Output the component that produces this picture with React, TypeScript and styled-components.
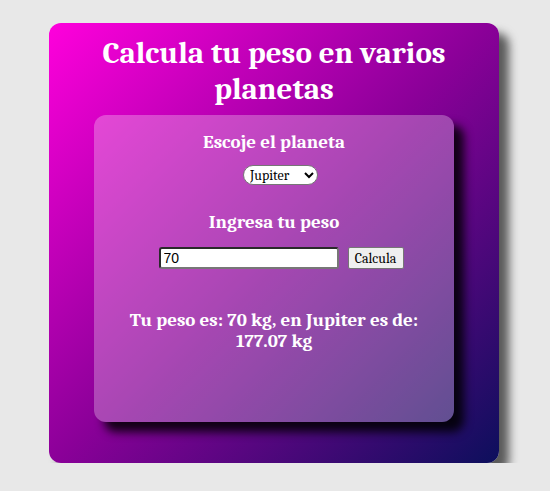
import React, { useState } from 'react'
import styled, { createGlobalStyle } from 'styled-components'

const GlobalStyle = createGlobalStyle`
  body {
    margin: 0;
    background: #e8e8e8;
    font-family: Cambria, 'Liberation Serif', serif;
  }
`

const Page = styled.div`
  display: flex;
  justify-content: center;
  padding-top: 23px;
  padding-right: 2px;
`

const Card = styled.div`
  width: 450px;
  height: 440px;
  box-sizing: border-box;
  border-radius: 12px;
  background: linear-gradient(135deg, #ff00dc 0%, #8a0098 50%, #0c0f5c 100%);
  box-shadow: 10px 10px 10px #5a5a5a;
  display: flex;
  flex-direction: column;
  align-items: center;
  color: white;
`

const Title = styled.h1`
  margin: 12px 0 8px;
  font-size: 31px;
  line-height: 36px;
  font-weight: bold;
  text-align: center;
  width: 380px;
`

const Inner = styled.div`
  width: 360px;
  height: 307px;
  border-radius: 12px;
  background: rgba(255, 255, 255, 0.28);
  box-shadow: 10px 10px 10px rgba(0, 0, 0, 0.85);
  display: flex;
  flex-direction: column;
  align-items: center;
`

const Label = styled.h3<{ $top: number }>`
  margin: ${(p) => p.$top}px 0 0;
  font-size: 19px;
  line-height: 22px;
  font-weight: bold;
`

const PlanetSelect = styled.select`
  margin-top: 12px;
  margin-left: 13px;
  width: 75px;
  height: 20px;
  border-radius: 10px;
  border: 1px solid #767676;
  background: white;
  font-family: Cambria, 'Liberation Serif', serif;
  font-size: 14px;
  padding: 0 2px;
`

const Row = styled.div`
  margin-top: 14px;
  display: flex;
  gap: 9px;
  margin-left: 14px;
`

const WeightInput = styled.input`
  width: 180px;
  height: 22px;
  box-sizing: border-box;
  border: 2px solid #2a2a2a;
  border-right-color: #777;
  border-bottom-color: #777;
  border-radius: 3px;
  padding: 0 3px;
  font-family: 'Liberation Sans', Arial, sans-serif;
  font-size: 14px;
`

const CalcButton = styled.button`
  height: 22px;
  width: 56px;
  padding: 0;
  border: 1px solid #767676;
  border-radius: 2px;
  background: #efefef;
  font-family: Cambria, 'Liberation Serif', serif;
  font-size: 14px;
`

const Result = styled.p`
  margin: 41px 0 0;
  font-size: 19px;
  line-height: 21px;
  font-weight: bold;
  text-align: center;
  width: 330px;
`

const gravity: Record<string, number> = {
  Mercurio: 0.378,
  Venus: 0.907,
  Marte: 0.377,
  Jupiter: 2.5296,
  Saturno: 1.065,
}

const App = () => {
  const [planet, setPlanet] = useState('Jupiter')
  const [weight, setWeight] = useState('70')
  const [result, setResult] = useState({ weight: 70, planet: 'Jupiter' })

  const calcular = () => setResult({ weight: Number(weight), planet })
  const value = (result.weight * gravity[result.planet]).toFixed(2)

  return (
    <>
      <GlobalStyle />
      <Page>
        <Card>
          <Title>Calcula tu peso en varios planetas</Title>
          <Inner>
            <Label $top={16}>Escoje el planeta</Label>
            <PlanetSelect value={planet} onChange={(e) => setPlanet(e.target.value)}>
              {Object.keys(gravity).map((p) => (
                <option key={p}>{p}</option>
              ))}
            </PlanetSelect>
            <Label $top={26}>Ingresa tu peso</Label>
            <Row>
              <WeightInput value={weight} onChange={(e) => setWeight(e.target.value)} />
              <CalcButton onClick={calcular}>Calcula</CalcButton>
            </Row>
            <Result>
              Tu peso es: {result.weight} kg, en {result.planet} es de: {value} kg
            </Result>
          </Inner>
        </Card>
      </Page>
    </>
  )
}

export default App
